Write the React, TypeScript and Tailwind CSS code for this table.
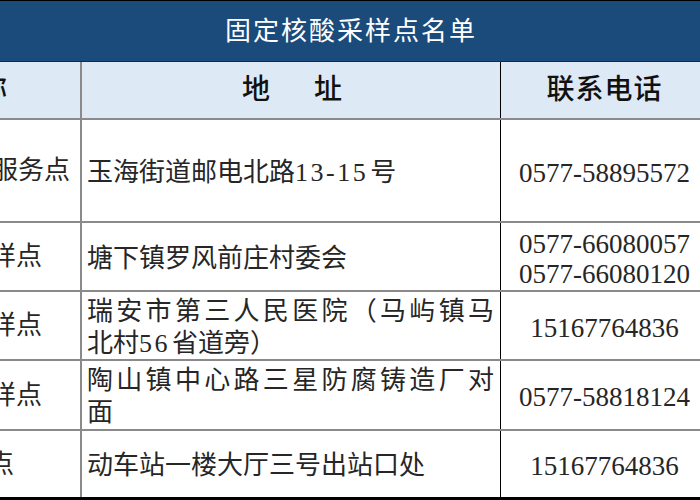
const FONT = "font-['Liberation_Serif','Noto_Sans_CJK_SC',serif]";

type Row = {
  name: string;
  namePad: string;
  h: string;
  addr: string[];
  phones: string[];
};

const rows: Row[] = [
  { name: "服务点", namePad: "pr-[10px]", h: "h-[103px]", addr: ["玉海街道邮电北路13-15号"], phones: ["0577-58895572"] },
  { name: "样点", namePad: "pr-[38px]", h: "h-[69px]", addr: ["塘下镇罗风前庄村委会"], phones: ["0577-66080057", "0577-66080120"] },
  { name: "样点", namePad: "pr-[38px]", h: "h-[69px]", addr: ["瑞安市第三人民医院（马屿镇马", "北村56省道旁）"], phones: ["15167764836"] },
  { name: "样点", namePad: "pr-[38px]", h: "h-[70px]", addr: ["陶山镇中心路三星防腐铸造厂对", "面"], phones: ["0577-58818124"] },
  { name: "点", namePad: "pr-[66px]", h: "h-[69px]", addr: ["动车站一楼大厅三号出站口处"], phones: ["15167764836"] },
];

// digits in the address column sit a little wider than the serif default
function Addr({ text }: { text: string }) {
  const parts = text.split(/([0-9-]+)/);
  return (
    <>
      {parts.map((p, i) =>
        /^[0-9-]+$/.test(p) ? (
          <span key={i} className="tracking-[2.5px] pr-[2px]">
            {p}
          </span>
        ) : (
          <span key={i}>{p}</span>
        )
      )}
    </>
  );
}

export default function App() {
  return (
    <div className={`w-[700px] h-[500px] overflow-hidden bg-white ${FONT}`}>
      <div className="h-[62px] border-t border-b border-t-black border-b-[#0f2d4a] bg-[#1b4b7a] flex items-center justify-center">
        <span className="text-white text-[26px] tracking-[2px] pl-[2px]">固定核酸采样点名单</span>
      </div>

      <div className="flex w-[708px] h-[58px] bg-[#ddeaf6] border-b-2 border-[#8a8a8a] text-[28px] text-[#111] font-medium">
        <div className="w-[82px] shrink-0 border-r-2 border-[#8a8a8a] flex items-center justify-end pr-[73px] whitespace-nowrap">
          称
        </div>
        <div className="w-[419px] shrink-0 border-r border-black flex items-center justify-center gap-[44px] pl-[2px]">
          <span>地</span>
          <span>址</span>
        </div>
        <div className="w-[207px] shrink-0 flex items-center justify-center tracking-[1px]">联系电话</div>
      </div>

      {rows.map((r, i) => (
        <div
          key={i}
          className={`flex w-[708px] ${r.h} ${i === rows.length - 1 ? "border-b-[3px] border-black" : "border-b-2 border-[#8a8a8a]"} text-[#262626]`}
        >
          <div className={`w-[82px] shrink-0 border-r-2 border-[#8a8a8a] flex items-center justify-end ${r.namePad} text-[26px] whitespace-nowrap`}>
            {r.name}
          </div>
          <div className="w-[419px] shrink-0 border-r border-black flex flex-col justify-center pl-[5px] pr-[6px] text-[26px] leading-[32px] pt-[4px]">
            {r.addr.map((line, j) => (
              <div
                key={j}
                className={r.addr.length > 1 && j === 0 ? "text-justify [text-align-last:justify]" : ""}
              >
                <Addr text={line} />
              </div>
            ))}
          </div>
          <div className="w-[207px] shrink-0 flex flex-col items-center justify-center text-[27px] leading-[30px] pt-[4px]">
            {r.phones.map((p) => (
              <div key={p}>{p}</div>
            ))}
          </div>
        </div>
      ))}
    </div>
  );
}
